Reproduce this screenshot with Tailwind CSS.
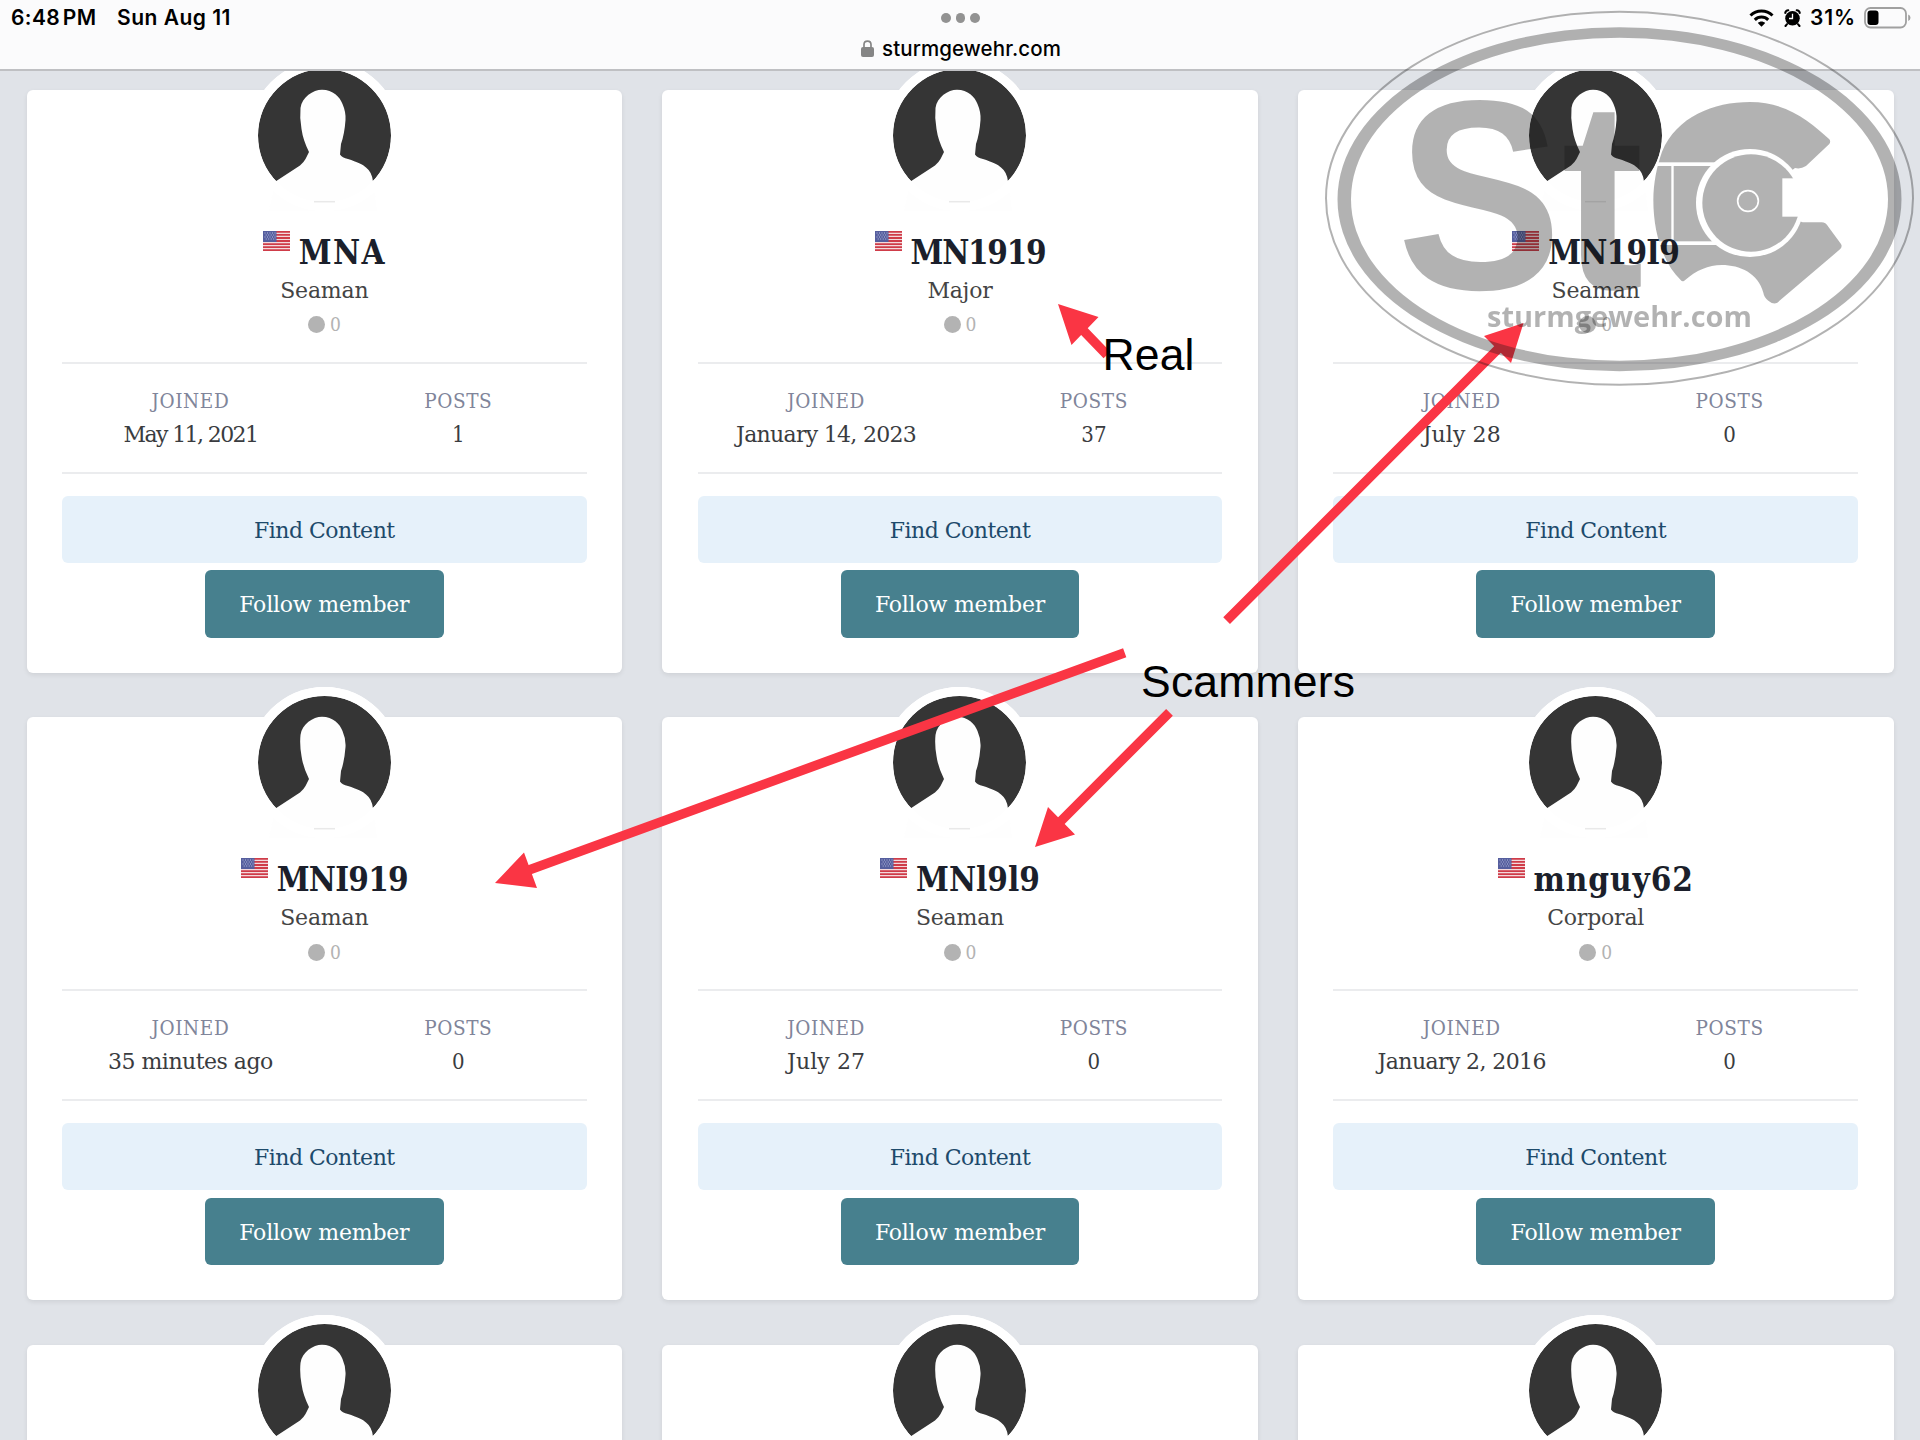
<!DOCTYPE html>
<html lang="en" class="h-[1440px] overflow-hidden">
<head>
    <meta charset="UTF-8">
    <meta name="viewport" content="width=device-width, initial-scale=1.0">
    <title>sturmgewehr.com - Members</title>
    <script src="https://cdn.jsdelivr.net/npm/@tailwindcss/browser@4"></script>
</head>

<body class="relative h-[1440px] w-[1920px] overflow-hidden bg-[#e0e3e8] font-['DejaVu_Serif',serif]">
    <!-- Shared shapes -->
    <svg class="hidden">
        <symbol id="avatar" viewBox="0 0 151 151">
            <circle cx="75.5" cy="75.5" r="75.5" fill="#fff"/>
            <circle cx="75.5" cy="75.5" r="66.5" fill="#353535"/>
            <path fill="#fefefe" d="M26.500 121.500 L51 105.500 Q55 102 56.500 99 L60 92 Q54 80 52.500 69 Q50.500 58 51.500 48 C53 37 64 29.700 73 29.700 C84 29.700 91 37 93.500 44 Q97 52 96.500 60 Q95.500 74 92 84 L91 94.500 Q93 97.500 99 99 C108 102 114 104.500 117 107.500 Q123 112 124 121.500 L128 151 H20Z"/>
            <circle cx="75.500" cy="75.500" r="71" fill="none" stroke="#fff" stroke-width="9"/>
            <path stroke="#e9e9e9" stroke-width="1.500" d="M65 141.700 H86"/>
        </symbol>
        <symbol id="flag" viewBox="0 0 27 20">
            <rect width="27" height="20" fill="#f3d9dc"/>
            <path stroke="#cf3c49" stroke-width="1.800" d="M0 .8H27M0 3.900H27M0 7H27M0 10H27M0 13.100H27M0 16.200H27M0 19.200H27"/>
            <rect width="13.500" height="11" fill="#555e9e"/>
            <path stroke="#b9bfdf" stroke-width="1" stroke-dasharray="1 1.500" d="M1.500 2H13M2.700 4H13M1.500 6H13M2.700 8H13"/>
        </symbol>
    </svg>

    <header class="relative z-10 h-[71px] border-b-2 border-[#bfc0c3] bg-[#fbfbfc] font-['Inter',sans-serif] text-black">
        <div class="flex h-9 items-center justify-between pr-[9px] pl-[11px] text-[21px] font-semibold">
            <div class="flex gap-[19px]">
                <span class="w-[87px] whitespace-nowrap tracking-[0.400px] [word-spacing:-3px]">6:48 PM</span>
                <span class="whitespace-nowrap tracking-[0.500px]">Sun Aug 11</span>
            </div>
            <div class="flex items-center">
                <svg class="mr-[10px] h-[18px] w-[25px]" viewBox="0 0 25 18" fill="none" stroke="#000" stroke-width="3">
                    <path d="M1.500 6.500 C7.500 .5 17.500 .5 23.500 6.500"/>
                    <path d="M5.800 10.800 C9.500 7.200 15.500 7.200 19.200 10.800"/>
                    <path fill="#000" stroke="none" d="M8.800 14 C11 12 14 12 16.200 14 L12.500 17.800Z"/>
                </svg>
                <svg class="mr-[9px] h-[18px] w-[17px]" viewBox="0 0 17 18">
                    <circle cx="8.500" cy="9.300" r="7.300"/>
                    <path fill="none" stroke="#000" stroke-width="2" stroke-linecap="round" d="M1.200 4 C1.500 2.500 2.800 1.300 4.300 1.200M15.800 4 C15.500 2.500 14.200 1.300 12.700 1.200M3 15.200 L1.500 17M14 15.200 L15.500 17"/>
                    <path fill="none" stroke="#fff" stroke-width="1.300" d="M8.500 4.800 V9.500 H5"/>
                </svg>
                <span class="mr-[8px] w-[46px] whitespace-nowrap tracking-[0.900px]">31%</span>
                <svg class="h-[22px] w-[47px]" viewBox="0 0 47 22">
                    <rect x="1" y="1" width="41" height="19.500" rx="5.500" fill="none" stroke="#a0a0a0" stroke-width="1.800"/>
                    <rect x="3.500" y="3.500" width="11" height="14.500" rx="3"/>
                    <path fill="#a0a0a0" d="M44.200 7.500 Q46.500 8.500 46.500 10.800 T44.200 14Z"/>
                </svg>
            </div>
        </div>
        <div class="flex h-[25px] items-center justify-center gap-[8px] pl-[2px]">
            <svg class="h-[17px] w-[13px]" viewBox="0 0 13 17">
                <rect y="7" width="13" height="10" rx="2" fill="#858585"/>
                <path fill="none" stroke="#858585" stroke-width="1.700" d="M3 8 V4.500 C3 0 10 0 10 4.500 V8"/>
            </svg>
            <span class="text-[20.500px] leading-[25px] font-medium tracking-[0.100px]">sturmgewehr.com</span>
        </div>
        <!-- multitasking dots -->
        <div class="absolute top-[13px] left-[941px] flex gap-[5px]">
            <i class="size-[9.500px] rounded-full bg-[#929292]"></i>
            <i class="size-[9.500px] rounded-full bg-[#929292]"></i>
            <i class="size-[9.500px] rounded-full bg-[#929292]"></i>
        </div>
    </header>

    <main id="members" class="grid grid-cols-3 gap-x-[40px] gap-y-[44.800px] pt-[18.500px] pr-[26.500px] pl-[26.500px]"></main>

    <!-- Annotations -->
    <svg class="absolute top-0 left-0 z-20" width="1920" height="1440" viewBox="0 0 1920 1440">
        <g fill="#fa3544" stroke="#fa3544">
            <path stroke-width="9.500" d="M1080 327 L1107 355M1502 345 L1226.600 620.700M518 874 L1124.700 652.700M1057 825 L1169.500 712.300"/>
            <path stroke="none" d="M1058 304 L1098.500 317 L1071.500 345ZM1523.500 323 L1484 336 L1511 363ZM495 883 L524 852.500 L537 888ZM1035 847 L1048 807 L1075 834.500Z"/>
        </g>
        <g class="font-['Liberation_Sans',sans-serif] text-[44.500px]">
            <text x="1102.500" y="369.500" textLength="92">Real</text>
            <text x="1141" y="697" textLength="214">Scammers</text>
        </g>
    </svg>

    <!-- Site badge -->
    <svg class="absolute top-0 left-0 z-30 fill-[#141414] opacity-[.32]" width="1920" height="1440" viewBox="0 0 1920 1440">
        <mask id="body-cut" maskUnits="userSpaceOnUse" x="700" y="0" width="800" height="780">
            <rect x="700" y="0" width="800" height="780" fill="#fff"/>
            <g fill="#000">
                <circle cx="1110" cy="369" r="162"/>
                <rect x="800" y="247" width="250" height="11"/>
                <rect x="800" y="484" width="250" height="11"/>
                <rect x="874" y="250" width="7" height="240"/>
            </g>
        </mask>
        <mask id="drum-cut" maskUnits="userSpaceOnUse" x="700" y="0" width="800" height="780">
            <rect x="700" y="0" width="800" height="780" fill="#fff"/>
            <rect x="1207" y="295" width="120" height="115" fill="#000"/>
            <circle cx="1104" cy="363" r="31" fill="none" stroke="#000" stroke-width="5"/>
        </mask>
        <ellipse cx="1619.500" cy="198.300" rx="293.500" ry="186.500" fill="none" stroke="#141414" stroke-width="2"/>
        <path fill-rule="evenodd" d="M1337.500 199.200 A282 172 0 0 1 1901.500 199.200 A282 172 0 0 1 1337.500 199.200Z M1351 199.200 A268.500 161.500 0 0 0 1888 199.200 A268.500 161.500 0 0 0 1351 199.200Z"/>
        <g class="font-['Liberation_Sans',sans-serif] text-[270px] font-bold">
            <text transform="translate(1397 288.500) scale(.915 1)">S</text>
            <text transform="translate(1561.500 288.500) scale(.915 1)">t</text>
        </g>
        <g transform="translate(1380 80) scale(.33333)">
            <path mask="url(#body-cut)" d="M846 215 C890 110 1000 66 1110 66 C1220 66 1290 125 1348 178 Q1353 184 1348 192 L1278 258 Q1262 268 1245 264 L1110 370 L1268 427 H1325 Q1337 427 1345 440 L1383 492 Q1388 500 1380 508 L1192 668 Q1180 675 1165 662 Q1152 652 1150 638 C1135 580 1080 555 1025 555 C985 555 950 570 912 603 Q906 606 902 600 C850 550 820 460 820 360 C820 310 830 260 846 215Z"/>
            <circle cx="1113" cy="369" r="146" mask="url(#drum-cut)"/>
        </g>
        <text class="font-['Open_Sans',sans-serif] text-[29px] font-bold" x="1487" y="326.500" textLength="265">sturmgewehr.com</text>
    </svg>

    <script>
        const members = [
            { name: 'MNA', nameFit: 'tracking-[1.400px]', rank: 'Seaman', joined: 'May 11, 2021', joinedFit: 'tracking-[-1.600px]', posts: 1 },
            { name: 'MN1919', nameFit: 'tracking-[-1.300px]', rank: 'Major', joined: 'January 14, 2023', joinedFit: 'tracking-[-0.700px]', posts: 37 },
            { name: 'MN19I9', nameFit: 'tracking-[-0.800px]', rank: 'Seaman', joined: 'July 28', joinedFit: 'tracking-[0.100px]', posts: 0 },
            { name: 'MNI919', nameFit: 'tracking-[-0.800px]', rank: 'Seaman', joined: '35 minutes ago', joinedFit: 'tracking-[-0.500px]', posts: 0 },
            { name: 'MNl9l9', nameFit: 'tracking-[0px]', rank: 'Seaman', joined: 'July 27', joinedFit: 'tracking-[0.100px]', posts: 0 },
            { name: 'mnguy62', nameFit: 'tracking-[0.900px]', rank: 'Corporal', joined: 'January 2, 2016', joinedFit: 'tracking-[-0.600px]', posts: 0 },
            {}, {}, {},
        ];

        const details = (m) => `
            <h2 class="mt-[20px] flex h-[44px] justify-center gap-[9px] font-['DejaVu_Serif_Condensed','DejaVu_Serif',serif] text-[33px] leading-[44px] font-bold text-[#1b1f2b] ${m.nameFit}">
                <svg class="h-[20px] w-[27px]"><use href="#flag"/></svg>${m.name}
            </h2>
            <p class="h-[30px] text-[22px] leading-[31px] tracking-[-0.200px] text-[#444]">${m.rank}</p>
            <p class="mt-[5px] flex h-[30px] items-center justify-center gap-[5px] font-['DejaVu_Serif_Condensed','DejaVu_Serif',serif] text-[19px] text-[#b3b3b3]">
                <i class="size-[17px] rounded-full bg-[#b3b3b3]"></i>0
            </p>
            <dl class="mt-[22px] grid h-[112px] grid-cols-2 gap-x-[11px] border-y-2 border-[#ebecee] pt-[21px] text-[22px] leading-[33px]">
                <div>
                    <dt class="font-['DejaVu_Serif_Condensed','DejaVu_Serif',serif] text-[20.500px] tracking-[0.600px] text-[#80859a]">JOINED</dt>
                    <dd class="text-[#3a3c40] ${m.joinedFit}">${m.joined}</dd>
                </div>
                <div>
                    <dt class="font-['DejaVu_Serif_Condensed','DejaVu_Serif',serif] text-[20.500px] tracking-[0.600px] text-[#80859a]">POSTS</dt>
                    <dd class="font-['DejaVu_Serif_Condensed','DejaVu_Serif',serif] text-[#3a3c40]">${m.posts}</dd>
                </div>
            </dl>
            <a class="mt-[22px] block h-[67px] rounded-md bg-[#e6f1fa] text-[22px] leading-[69px] tracking-[-0.500px] text-[#1d4a6b]">Find Content</a>
            <a class="mx-auto mt-[7.500px] block h-[67.500px] w-[238.500px] rounded-md bg-[#47808e] text-[22px] leading-[69px] tracking-[-0.200px] text-white">Follow member</a>`;

        document.getElementById('members').innerHTML = members.map((m) => `
            <section class="h-[583px] rounded-md bg-white px-[35.500px] text-center shadow-[0_2px_5px_rgba(0,0,0,0.08)]">
                <svg class="mx-auto -mt-[30px] block size-[151px]"><use href="#avatar"/></svg>
                ${m.name ? details(m) : ''}
            </section>`).join('');
    </script>
</body>
</html>
